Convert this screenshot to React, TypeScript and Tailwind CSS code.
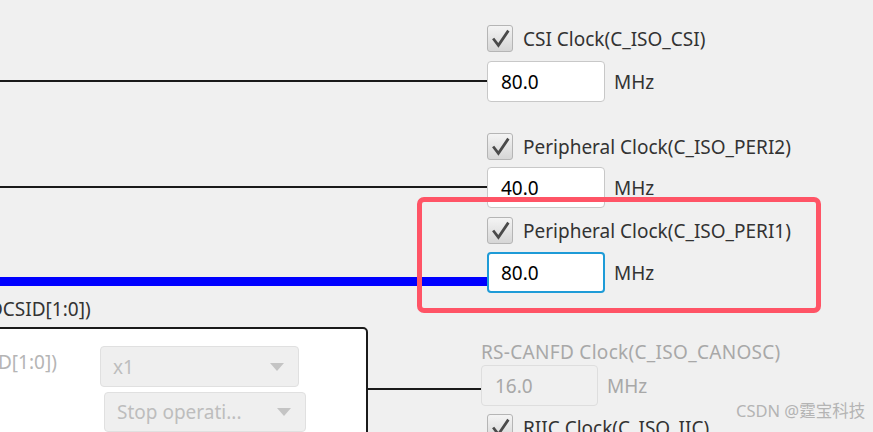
const font = { fontFamily: '"Noto Sans", "Open Sans", "Noto Sans CJK SC", sans-serif' };

function Check() {
  return (
    <div className="w-[26px] h-[27px] shrink-0 rounded-[3px] border border-[#b5b5b5] bg-gradient-to-b from-[#f4f4f4] to-[#d6d6d6] flex items-center justify-center">
      <svg width="21" height="21" viewBox="0 0 20 20">
        <path d="M3 10 L8 16.5 L17.5 2.5" fill="none" stroke="#4a4a4a" strokeWidth="2.6" />
      </svg>
    </div>
  );
}

function Field({
  value,
  focused,
  disabled,
  w = "w-[118px]",
}: {
  value: string;
  focused?: boolean;
  disabled?: boolean;
  w?: string;
}) {
  const box = focused
    ? "border-2 border-[#1e9bd7] bg-white text-black pl-[12px]"
    : disabled
      ? "border border-[#dedede] bg-[#f0f0f0] text-[#a8a8a8] pl-[13px]"
      : "border border-[#c8c8c8] bg-white text-black pl-[13px]";
  return (
    <div className="flex items-center gap-[9px]">
      <div className={`${w} h-[41px] rounded-[4px] flex items-center ${box}`}>{value}</div>
      <span className={disabled ? "text-[#a8a8a8]" : "text-[#333]"}>MHz</span>
    </div>
  );
}

function ClockNode({
  label,
  value,
  focused,
  gap,
}: {
  label: string;
  value: string;
  focused?: boolean;
  gap: string;
}) {
  return (
    <div className={`flex flex-col ${gap}`}>
      <div className="flex items-center gap-[10px] text-[#333] whitespace-nowrap">
        <Check />
        <span>{label}</span>
      </div>
      <Field value={value} focused={focused} />
    </div>
  );
}

function Combo({ text, className }: { text: string; className: string }) {
  return (
    <div
      className={`rounded-[4px] border border-[#e0e0e0] bg-[#efefef] flex items-center justify-between pl-[12px] pr-[14px] text-[#bdbdbd] ${className}`}
    >
      <span>{text}</span>
      <svg width="14" height="8" viewBox="0 0 14 8">
        <path d="M0 0 H14 L7 8 Z" fill="#c4c4c4" />
      </svg>
    </div>
  );
}

export default function App() {
  return (
    <div className="relative w-[873px] h-[432px] overflow-hidden bg-[#f0f0f0] text-[19px] leading-[26px]" style={font}>
      {/* wires */}
      <div className="absolute left-0 top-[80px] w-[488px] h-[2px] bg-[#1a1a1a]" />
      <div className="absolute left-0 top-[186px] w-[488px] h-[2px] bg-[#1a1a1a]" />
      <div className="absolute left-0 top-[277px] w-[488px] h-[9px] bg-[#0000ff]" />
      <div className="absolute left-[368px] top-[388px] w-[113px] h-[2px] bg-[#1a1a1a]" />

      {/* left block (clipped by the canvas edge) */}
      <div className="absolute left-[-12px] top-[296px] flex flex-col gap-[5px]">
        <div className="text-[#333] whitespace-nowrap">OCSID[1:0])</div>
        <div className="w-[380px] h-[130px] bg-white border-2 border-[#1a1a1a] rounded-tr-[5px] pt-[17px] pl-[8px]">
          <div className="flex">
            <span className="text-[#b5b5b5] whitespace-nowrap w-[102px] pt-[3px]">D[1:0])</span>
            <div className="flex flex-col gap-[5px]">
              <Combo text="x1" className="w-[199px] h-[41px]" />
              <Combo text="Stop operati..." className="ml-[4px] w-[202px] h-[40px]" />
            </div>
          </div>
        </div>
      </div>

      {/* clock nodes */}
      <div className="absolute left-[487px] top-[25px]">
        <ClockNode label="CSI Clock(C_ISO_CSI)" value="80.0" gap="gap-[9px]" />
      </div>
      <div className="absolute left-[487px] top-[133px]">
        <ClockNode label="Peripheral Clock(C_ISO_PERI2)" value="40.0" gap="gap-[7px]" />
      </div>
      <div className="absolute left-[487px] top-[217px]">
        <ClockNode label="Peripheral Clock(C_ISO_PERI1)" value="80.0" focused gap="gap-[8px]" />
      </div>
      <div className="absolute left-[481px] top-[339px] flex flex-col">
        <span className="text-[#a8a8a8] whitespace-nowrap tracking-[0.3px]">RS-CANFD Clock(C_ISO_CANOSC)</span>
        <Field value="16.0" disabled w="w-[117px]" />
      </div>
      <div className="absolute left-[487px] top-[414px] flex items-center gap-[10px] text-[#333] whitespace-nowrap">
        <Check />
        <span>RIIC Clock(C_ISO_IIC)</span>
      </div>

      {/* highlight box */}
      <div className="absolute left-[417px] top-[197px] w-[404px] h-[116px] border-[5px] border-[#ff5466] rounded-[7px]" />

      {/* watermark */}
      <div className="absolute left-[736px] top-[401px] text-[16.5px] leading-[20px] text-[#b4b4b4] whitespace-nowrap">
        CSDN @霆宝科技
      </div>
    </div>
  );
}
